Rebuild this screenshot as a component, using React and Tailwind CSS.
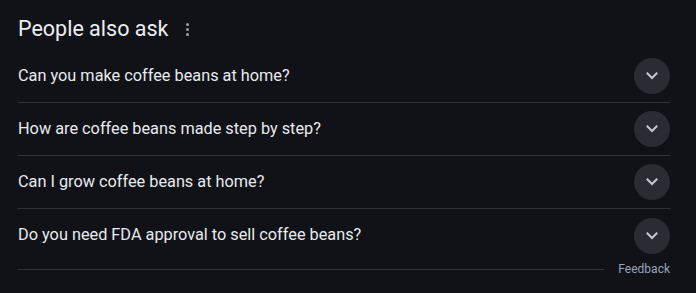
import React from 'react';

const questions = [
  'Can you make coffee beans at home?',
  'How are coffee beans made step by step?',
  'Can I grow coffee beans at home?',
  'Do you need FDA approval to sell coffee beans?',
];

function Chevron() {
  return (
    <svg width="12" height="8" viewBox="0 0 12 8" fill="none">
      <path d="M1.5 1.5L6 6l4.5-4.5" stroke="#c4c7cf" strokeWidth="2" strokeLinecap="square" />
    </svg>
  );
}

export default function App() {
  return (
    <div
      className="w-[696px] h-[293px] bg-[#101218] text-[#e8eaed] pl-[18px] pr-[26px] overflow-hidden"
      style={{ fontFamily: 'Roboto, "Liberation Sans", sans-serif' }}
    >
      <div className="flex items-center h-[50px] pt-[7px]">
        <h2 className="text-[21.5px] leading-none font-normal text-[#eceef2]">People also ask</h2>
        <div className="ml-[18px] flex flex-col gap-[2px] mt-[1px]">
          <span className="w-[3px] h-[3px] rounded-full bg-[#9aa0a6]" />
          <span className="w-[3px] h-[3px] rounded-full bg-[#9aa0a6]" />
          <span className="w-[3px] h-[3px] rounded-full bg-[#9aa0a6]" />
        </div>
      </div>
      {questions.map((q, i) => (
        <div
          key={q}
          className={`flex items-center justify-between h-[53px] ${i < questions.length - 1 ? 'border-b border-[#303238]' : ''}`}
        >
          <span className="text-[16.3px] leading-none text-[#e8eaed]">{q}</span>
          <div className="w-9 h-9 rounded-full bg-[#2a2c33] flex items-center justify-center">
            <Chevron />
          </div>
        </div>
      ))}
      <div className="flex items-center mt-[1px]">
        <div className="flex-1 h-px bg-[#303238]" />
        <span className="ml-[14px] text-[12px] leading-none text-[#9aa3b8]">Feedback</span>
      </div>
    </div>
  );
}
